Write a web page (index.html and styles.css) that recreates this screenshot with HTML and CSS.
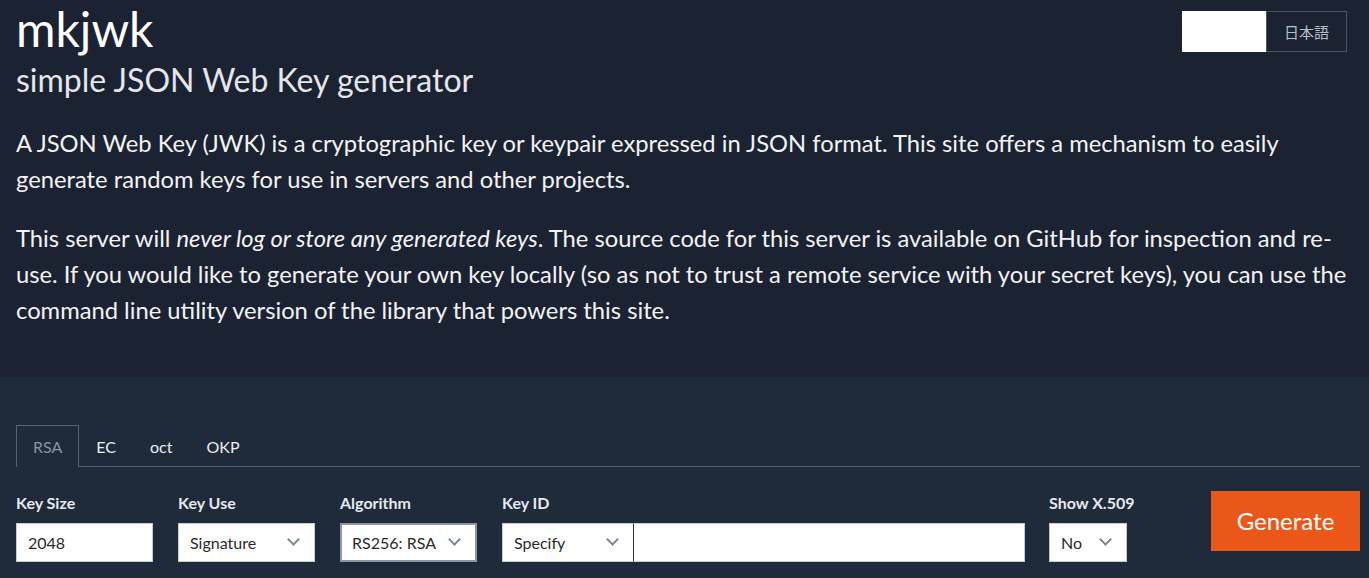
FILE: index.html
```html
<!DOCTYPE html>
<html lang="en">
<head>
<meta charset="utf-8">
<title>mkjwk - JSON Web Key generator</title>
<link rel="stylesheet" href="styles.css">
</head>
<body>
<header class="hero">
  <div class="hero-top">
    <div class="brand">
      <h1 class="title">mkjwk</h1>
      <h2 class="subtitle">simple JSON Web Key generator</h2>
    </div>
    <div class="lang">
      <span class="lang-btn lang-active"></span>
      <span class="lang-btn">日本語</span>
    </div>
  </div>
  <p class="lead">A JSON Web Key (JWK) is a cryptographic key or keypair expressed in JSON format. This site offers a mechanism to easily generate random keys for use in servers and other projects.</p>
  <p class="lead">This server will <em>never log or store any generated keys</em>. The source code for this server is available on GitHub for inspection and re-use. If you would like to generate your own key locally (so as not to trust a remote service with your secret keys), you can use the command line utility version of the library that powers this site.</p>
</header>
<main class="panel">
  <nav class="tabs">
    <span class="tab tab-active">RSA</span>
    <span class="tab">EC</span>
    <span class="tab">oct</span>
    <span class="tab">OKP</span>
  </nav>
  <div class="form-row">
    <div class="field w-size">
      <label class="label">Key Size</label>
      <div class="control input">2048</div>
    </div>
    <div class="field w-use">
      <label class="label">Key Use</label>
      <div class="control select"><span class="val">Signature</span><span class="chev"></span></div>
    </div>
    <div class="field w-alg">
      <label class="label">Algorithm</label>
      <div class="control select focus"><span class="val clip">RS256: RSASSA-PKCS1-v1_5 using SHA-256</span><span class="chev"></span></div>
    </div>
    <div class="field w-kid">
      <label class="label">Key ID</label>
      <div class="kid-group">
        <div class="control select kid-sel"><span class="val">Specify</span><span class="chev"></span></div>
        <div class="control input kid-input"></div>
      </div>
    </div>
    <div class="field w-x509">
      <label class="label">Show X.509</label>
      <div class="control select"><span class="val">No</span><span class="chev"></span></div>
    </div>
    <button class="generate">Generate</button>
  </div>
</main>
</body>
</html>
```

FILE: styles.css
```css
* { box-sizing: border-box; }
html, body {
  margin: 0;
  padding: 0;
}
body {
  font-family: Lato, "Noto Sans CJK JP", "Noto Sans", sans-serif;
  background: #1f2a3a;
  color: #eef0f3;
}
.hero {
  background: #1b2232;
  padding: 0 9px 49px 16px;
}
.hero-top {
  display: flex;
  justify-content: space-between;
  align-items: flex-start;
}
.title {
  margin: 0;
  font-size: 48px;
  font-weight: 400;
  line-height: 1.2;
  color: #ffffff;
}
.subtitle {
  margin: 3px 0 0;
  font-size: 32px;
  font-weight: 400;
  line-height: 1.2;
  color: #e4e6ea;
}
.lang {
  display: flex;
  margin-top: 11px;
  margin-right: 13px;
}
.lang-btn {
  display: flex;
  align-items: center;
  justify-content: center;
  height: 41px;
  width: 81px;
  border: 1px solid #4b5566;
  font-size: 15px;
  color: #b9bfc9;
}
.lang-active {
  width: 84px;
  background: #ffffff;
  border-color: #ffffff;
}
.lead {
  margin: 26px 0 0;
  font-size: 23.75px;
  line-height: 36px;
  color: #f2f3f5;
}
.lead + .lead { margin-top: 23px; }
.lead em { font-style: italic; }

.panel {
  padding: 48px 9px 20px 16px;
}
.tabs {
  display: flex;
  border-bottom: 1px solid #566172;
  height: 42px;
}
.tab {
  display: flex;
  align-items: center;
  padding: 0 16px;
  height: 42px;
  border: 1px solid transparent;
  border-bottom: none;
  font-size: 16px;
  color: #eceef2;
}
.tab-active {
  border-color: #566172;
  background: #1f2a3a;
  color: #8a93a3;
  margin-bottom: -1px;
  height: 42px;
}
.form-row {
  display: flex;
  align-items: flex-start;
  gap: 25px;
  margin-top: 26px;
}
.field {
  display: flex;
  flex-direction: column;
  gap: 10px;
}
.label {
  font-size: 16px;
  font-weight: 700;
  line-height: 20px;
  color: #e6e9ee;
  white-space: nowrap;
}
.control {
  height: 39px;
  background: #ffffff;
  border: 1px solid #c7ccd4;
  color: #2a2a2a;
  font-size: 16px;
  display: flex;
  align-items: center;
  padding: 0 11px;
}
.select {
  justify-content: space-between;
  padding-right: 16px;
}
.val { white-space: nowrap; }
.clip {
  overflow: hidden;
  width: 84px;
  text-overflow: clip;
}
.chev {
  width: 9px;
  height: 9px;
  border-right: 2px solid #7d8796;
  border-bottom: 2px solid #7d8796;
  transform: rotate(45deg);
  margin-top: -5px;
  flex: none;
}
.focus {
  border: 2px solid #8c95a3;
  padding-left: 10px;
}
.w-size, .w-use, .w-alg { width: 137px; }
.w-kid { width: 523px; margin-right: -1px; }
.w-x509 { width: 78px; }
.kid-group { display: flex; }
.kid-sel { width: 132px; border-right: 1px solid #2b3648; }
.kid-input { flex: 1; border-left: none; }
.generate {
  margin-left: auto;
  margin-top: -2px;
  width: 149px;
  height: 60px;
  border: none;
  background: #eb5719;
  color: #ffffff;
  font-family: Lato, sans-serif;
  font-size: 24px;
  cursor: pointer;
}
```
